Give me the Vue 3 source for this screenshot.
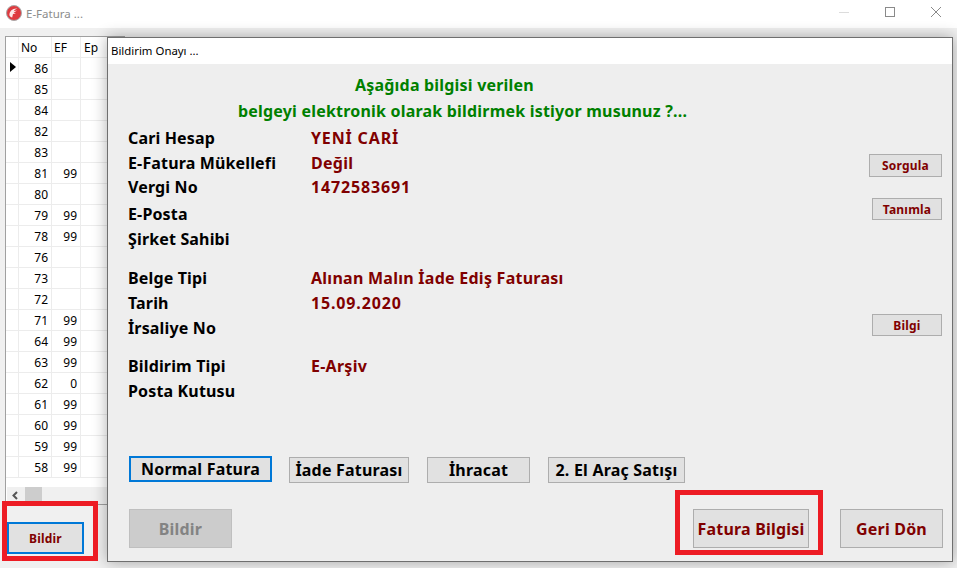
<script setup>
const rows = [
  ['86',''],['85',''],['84',''],['82',''],['83',''],['81','99'],['80',''],['79','99'],['78','99'],['76',''],
  ['73',''],['72',''],['71','99'],['64','99'],['63','99'],['62','0'],['61','99'],['60','99'],['59','99'],['58','99']
]
const cari = [
  { l: 'Cari Hesap', v: 'YENİ CARİ', h: 25, c: 'wide' },
  { l: 'E-Fatura Mükellefi', v: 'Değil', h: 25 },
  { l: 'Vergi No', v: '1472583691', h: 23, c: 'wide' },
  { l: 'E-Posta', v: '', h: 31 },
  { l: 'Şirket Sahibi', v: '', h: 19 }
]
const belge = [
  { l: 'Belge Tipi', v: 'Alınan Malın İade Ediş Faturası', h: 25 },
  { l: 'Tarih', v: '15.09.2020', h: 25, c: 'wide' },
  { l: 'İrsaliye No', v: '', h: 25 }
]
const bildirim = [
  { l: 'Bildirim Tipi', v: 'E-Arşiv', h: 25 },
  { l: 'Posta Kutusu', v: '', h: 25 }
]
const groups = [
  { items: cari, gap: 0 },
  { items: belge, gap: 17 },
  { items: bildirim, gap: 13 }
]
</script>

<template>
  <div class="app">
    <header class="titlebar">
      <svg class="logo" width="16" height="16" viewBox="0 0 16 16">
        <circle cx="8" cy="8" r="7.500" fill="#de3a3f" stroke="#a8a8a8" stroke-width="1" />
        <path d="M3.500 10.500c-.5-4 3-7.500 8-7-2 .6-3.300 1.600-3.800 2.800l3.300-.8-3.300 2.300 2.300.7-3 .6-.8 3.400c-1.200-.3-2.200-1-2.700-2z" fill="#fde8e8" />
      </svg>
      <span class="apptitle">E-Fatura ...</span>
      <div class="winctl">
        <svg width="12" height="12" viewBox="0 0 12 12"><path d="M1 6.500h10" stroke="#dcdcdc" /></svg>
        <svg width="12" height="12" viewBox="0 0 12 12"><rect x="1.500" y="1.500" width="9" height="9" fill="none" stroke="#8a8a8a" /></svg>
        <svg width="12" height="12" viewBox="0 0 12 12"><path d="M1 1l10 10M11 1L1 11" stroke="#8a8a8a" fill="none" /></svg>
      </div>
    </header>

    <main class="desk">
      <section class="grid">
        <div class="gridhead">
          <div class="cind"></div>
          <div class="cno hd">No</div>
          <div class="cef hd">EF</div>
          <div class="cep hd">Ep</div>
        </div>
        <div v-for="(r, i) in rows" :key="r[0]" class="gridrow">
          <div class="cind"><span v-if="i === 0" class="arrow"></span></div>
          <div class="cno num">{{ r[0] }}</div>
          <div class="cef num">{{ r[1] }}</div>
          <div class="cep"></div>
        </div>
        <div class="spacer"></div>
        <div class="hscroll">
          <svg width="16" height="17" viewBox="0 0 16 17"><path d="M10 5L6.500 8.500 10 12" fill="none" stroke="#555" stroke-width="2" /></svg>
          <div class="thumb"></div>
        </div>
      </section>
      <div class="leftfoot">
        <button class="btn small focus">Bildir</button>
      </div>

      <section class="dialog">
        <div class="dlgtitle">Bildirim Onayı ...</div>
        <div class="dlgbody">
          <p class="green first">Aşağıda bilgisi verilen</p>
          <p class="green second">belgeyi elektronik olarak bildirmek istiyor musunuz ?...</p>

          <div class="formarea">
            <div class="fields">
              <div v-for="(g, gi) in groups" :key="gi" class="group" :style="{ marginTop: g.gap + 'px' }">
                <div v-for="f in g.items" :key="f.l" class="frow" :style="{ height: f.h + 'px' }">
                  <span class="flabel">{{ f.l }}</span>
                  <span class="fvalue" :class="f.c">{{ f.v }}</span>
                </div>
              </div>
            </div>
            <div class="sidebtns">
              <button class="btn small sorgula">Sorgula</button>
              <button class="btn small tanimla">Tanımla</button>
              <button class="btn small bilgi">Bilgi</button>
            </div>
          </div>

          <div class="types">
            <button class="btn type t1 focus">Normal Fatura</button>
            <button class="btn type t2">İade Faturası</button>
            <button class="btn type t3">İhracat</button>
            <button class="btn type t4">2. El Araç Satışı</button>
          </div>

          <div class="actions">
            <button class="btn big disabled w103">Bildir</button>
            <div class="grow"></div>
            <button class="btn big w116">Fatura Bilgisi</button>
            <button class="btn big w103 geri">Geri Dön</button>
          </div>
        </div>
      </section>

      <div class="mark mark1"></div>
      <div class="mark mark2"></div>
    </main>
  </div>
</template>

<style scoped>
.app {
  width: 957px;
  height: 568px;
  display: flex;
  flex-direction: column;
  overflow: hidden;
  background: #f0f0f0;
  font-family: "Noto Sans", sans-serif;
}
.titlebar {
  height: 28px;
  flex: none;
  background: #fff;
  display: flex;
  align-items: center;
  padding-left: 6px;
  box-sizing: border-box;
}
.logo { margin-top: -2px; }
.apptitle {
  margin-left: 4px;
  margin-top: -1px;
  font: 11.500px "Noto Sans", sans-serif;
  color: #8c8c8c;
}
.winctl {
  margin-left: auto;
  display: flex;
  gap: 34px;
  padding-right: 15px;
  margin-top: -4px;
}
.desk {
  position: relative;
  flex: 1;
  min-height: 0;
}
.grid {
  margin: 8px 0 0 5px;
  width: 120px;
  height: 469px;
  box-sizing: border-box;
  background: #fff;
  border: 1px solid #a0a0a0;
  border-right: none;
  display: flex;
  flex-direction: column;
  font: 12px "Noto Sans", sans-serif;
  color: #000;
}
.gridhead {
  display: flex;
  height: 21px;
  flex: none;
  border-bottom: 1px solid #ececec;
  box-sizing: border-box;
}
.gridrow {
  display: flex;
  height: 21px;
  flex: none;
  border-bottom: 1px solid #ececec;
  box-sizing: border-box;
}
.cind {
  width: 11px;
  flex: none;
  border-right: 1px solid #ececec;
  position: relative;
  margin-left: 1px;
  box-sizing: content-box;
}
.cno { width: 33px; flex: none; border-right: 1px solid #ececec; }
.cef { width: 29px; flex: none; border-right: 1px solid #ececec; }
.cep { flex: 1; }
.hd { padding-top: 1px; line-height: 20px; box-sizing: border-box; }
.cno.hd { padding-left: 2px; }
.cef.hd { padding-left: 2px; }
.cep.hd { padding-left: 3px; }
.num {
  box-sizing: border-box;
  text-align: right;
  padding-right: 3px;
  padding-top: 1px;
  line-height: 20px;
}
.arrow {
  position: absolute;
  left: 3px;
  top: 4px;
  border-left: 6px solid #000;
  border-top: 5px solid transparent;
  border-bottom: 5px solid transparent;
}
.spacer { flex: 1; }
.hscroll {
  height: 17px;
  flex: none;
  background: #f0f0f0;
  display: flex;
  margin-left: 1px;
}
.hscroll svg { flex: none; }
.thumb { width: 17px; margin-left: 2px; background: #cdcdcd; }
.leftfoot {
  margin: 17px 0 0 7px;
}
.btn {
  font-family: "Noto Sans", sans-serif;
  font-weight: 700;
  background: #e1e1e1;
  border: 1px solid #adadad;
  color: #800000;
  padding: 0;
  box-sizing: border-box;
  white-space: nowrap;
  display: block;
  letter-spacing: 0.2px;
}
.small { font-size: 12px; }
.leftfoot .btn { width: 77px; height: 32px; }
.focus { border: 2px solid #0078d7; }
.dialog {
  position: absolute;
  left: 107px;
  top: 9px;
  width: 846px;
  height: 525px;
  box-sizing: border-box;
  border: 1px solid #6f6f6f;
  box-shadow: 0 0 14px rgba(0, 0, 0, 0.32);
  background: #eeeeee;
  display: flex;
  flex-direction: column;
}
.dlgtitle {
  height: 26px;
  flex: none;
  background: #fff;
  font: 11.400px/26px "Noto Sans", sans-serif;
  color: #000;
  padding-left: 3px;
}
.dlgbody {
  flex: 1;
  display: flex;
  flex-direction: column;
  min-height: 0;
  padding: 0 9px 0 21px;
}
.green {
  margin: 0;
  color: #008000;
  font-size: 16px;
  font-weight: 700;
  line-height: 26px;
  white-space: nowrap;
  letter-spacing: 0.2px;
}
.first { margin: 8px 0 0 226px; }
.second { margin: 0 0 0 109px; }
.formarea {
  display: flex;
  margin-top: 1px;
  height: 331px;
  flex: none;
}
.fields { flex: 1; margin-left: -1px; }
.frow {
  display: flex;
  align-items: center;
  font-size: 16px;
  font-weight: 700;
  white-space: nowrap;
}
.flabel { width: 183px; flex: none; color: #000; letter-spacing: 0.15px; }
.fvalue { color: #800000; letter-spacing: 0.26px; }
.fvalue.wide { letter-spacing: 0.85px; }
.sidebtns {
  width: 74px;
  flex: none;
  margin-right: 1px;
  display: flex;
  flex-direction: column;
  align-items: flex-end;
}
.sorgula { width: 73px; height: 23px; margin-top: 29px; }
.tanimla { width: 70px; height: 22px; margin-top: 21px; }
.bilgi { width: 70px; height: 22px; margin-top: 94px; }
.types {
  display: flex;
  align-items: flex-start;
  flex: none;
  height: 53px;
}
.type { color: #000; font-size: 16px; height: 26px; margin-top: 1px; }
.t1 { width: 143px; margin-top: 0; }
.t2 { width: 120px; margin-left: 17px; }
.t3 { width: 103px; margin-left: 18px; }
.t4 { width: 137px; margin-left: 18px; }
.actions { display: flex; flex: none; }
.big { height: 39px; font-size: 16px; }
.w103 { width: 103px; }
.w116 { width: 116px; }
.geri { margin-left: 31px; }
.grow { flex: 1; }
.disabled { background: #cccccc; border-color: #bfbfbf; color: #838383; }
.mark {
  position: absolute;
  border: 5px solid #ed1c24;
  box-sizing: border-box;
  pointer-events: none;
}
.mark1 { left: 2px; top: 473px; width: 96px; height: 60px; }
.mark2 { left: 675px; top: 462px; width: 148px; height: 65px; }
</style>
